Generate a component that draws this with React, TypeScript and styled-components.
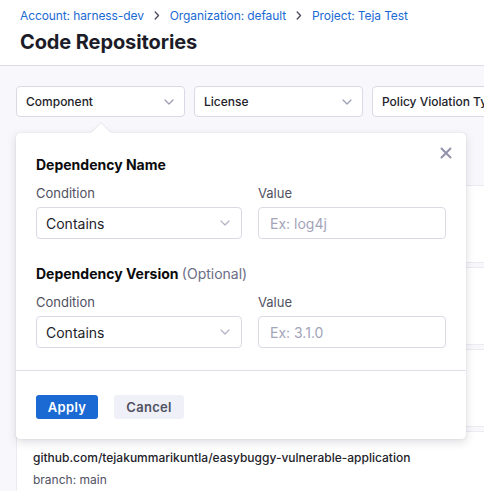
import React from "react";
import styled, { createGlobalStyle } from "styled-components";

const Global = createGlobalStyle`
  html, body { margin: 0; padding: 0; }
  body {
    width: 484px;
    height: 491px;
    overflow: hidden;
    background: #f8f8fc;
    font-family: Inter, "Noto Sans", sans-serif;
    -webkit-font-smoothing: antialiased;
  }
  * { box-sizing: border-box; }
`;

const Page = styled.div`
  position: relative;
  width: 760px;
  height: 491px;
  background: #f8f8fc;
`;

const Header = styled.header`
  height: 66px;
  background: #fff;
  border-bottom: 1px solid #dcdde8;
  padding: 6px 20px 0;
  display: flex;
  flex-direction: column;
`;

const Crumbs = styled.div`
  display: flex;
  align-items: center;
  gap: 10px;
  height: 18px;
  font-size: 12px;
  letter-spacing: -0.1px;
  color: #1b6ad3;
`;

const Sep = styled.span`
  display: flex;
  align-items: center;
`;

const Title = styled.h1`
  margin: 5px 0 0;
  font-size: 20px;
  line-height: 26px;
  font-weight: 700;
  color: #1c1c28;
  letter-spacing: -0.1px;
`;

const Filters = styled.div`
  display: flex;
  gap: 9px;
  padding: 20px 16px 0;
`;

const FilterBox = styled.div`
  width: 169px;
  height: 31px;
  flex: none;
  background: #fff;
  border: 1px solid #d9dae5;
  border-radius: 4px;
  display: flex;
  align-items: center;
  justify-content: space-between;
  padding: 0 10px 0 9px;
  font-size: 12px;
  font-weight: 500;
  color: #22222a;
`;

const List = styled.div`
  display: flex;
  flex-direction: column;
  gap: 4px;
  padding: 68px 0 0 16px;
`;

const Card = styled.div`
  height: 78px;
  background: #fff;
  border: 1px solid #ebebf2;
  border-radius: 4px;
  padding: 16px 16px 0 16px;
`;

const RepoName = styled.div`
  font-size: 12px;
  font-weight: 500;
  color: #22222a;
  line-height: 20px;
`;

const Branch = styled.div`
  margin-top: 2px;
  font-size: 12px;
  color: #4f5162;
  line-height: 20px;
`;

const Popover = styled.div`
  position: absolute;
  left: 16px;
  top: 133px;
  width: 450px;
  height: 306px;
  background: #fff;
  border-radius: 4px;
  box-shadow: 0 0 1px rgba(40, 41, 61, 0.25), 0 3px 10px rgba(96, 97, 112, 0.22);
  display: flex;
  flex-direction: column;

  &::before {
    content: "";
    position: absolute;
    left: 75px;
    top: -10px;
    width: 0;
    height: 0;
    border-left: 10px solid transparent;
    border-right: 10px solid transparent;
    border-bottom: 10px solid #fff;
    filter: drop-shadow(0 -1px 0.5px rgba(40, 41, 61, 0.1));
  }
`;

const Close = styled.button`
  position: absolute;
  right: 14px;
  top: 14px;
  width: 12px;
  height: 12px;
  padding: 0;
  border: none;
  background: none;
  display: flex;
  align-items: center;
  justify-content: center;
`;

const Body = styled.div`
  padding: 22px 20px 0;
  display: flex;
  flex-direction: column;
  height: 238px;
  border-bottom: 1px solid #dcdde8;
`;

const Section = styled.div<{ $gapTop?: number }>`
  display: flex;
  flex-direction: column;
  margin-top: ${(p) => p.$gapTop ?? 0}px;
`;

const Heading = styled.div`
  font-size: 14px;
  line-height: 20px;
  font-weight: 700;
  color: #0b0b0d;
`;

const Optional = styled.span`
  font-weight: 400;
  color: #6b6d85;
`;

const Fields = styled.div`
  margin-top: 9px;
  display: grid;
  grid-template-columns: 206px 188px;
  column-gap: 16px;
`;

const Field = styled.div`
  display: flex;
  flex-direction: column;
  gap: 5px;
`;

const Label = styled.label`
  font-size: 13px;
  line-height: 18px;
  color: #4f5162;
`;

const SelectBox = styled.div`
  height: 32px;
  border: 1px solid #d9dae5;
  border-radius: 4px;
  display: flex;
  align-items: center;
  justify-content: space-between;
  padding: 0 11px 0 9px;
  font-size: 14px;
  color: #22222a;
  background: #fff;
`;

const Input = styled.input`
  height: 32px;
  border: 1px solid #d9dae5;
  border-radius: 4px;
  padding: 0 11px;
  font-family: inherit;
  font-size: 14px;
  color: #22222a;
  outline: none;
  &::placeholder { color: #a3a4b8; }
`;

const Footer = styled.div`
  display: flex;
  gap: 16px;
  padding: 24px 20px 0;
`;

const Button = styled.button<{ $primary?: boolean }>`
  height: 24px;
  border: none;
  border-radius: 3px;
  font-family: inherit;
  font-size: 13px;
  font-weight: 600;
  letter-spacing: 0.3px;
  padding: 0;
  width: ${(p) => (p.$primary ? "62px" : "70px")};
  background: ${(p) => (p.$primary ? "#1b69d3" : "#f0f0f8")};
  color: ${(p) => (p.$primary ? "#fff" : "#4f5162")};
`;

const Chevron = ({ color = "#9b9cb3" }: { color?: string }) => (
  <svg width="10" height="6" viewBox="0 0 10 6" fill="none">
    <path d="M1 1l4 4 4-4" stroke={color} strokeWidth="1.2" strokeLinecap="round" strokeLinejoin="round" />
  </svg>
);

const CrumbChevron = () => (
  <svg width="6" height="9" viewBox="0 0 6 9" fill="none">
    <path d="M1.2 1l3.3 3.5-3.3 3.5" stroke="#4f5162" strokeWidth="1.4" strokeLinecap="round" strokeLinejoin="round" />
  </svg>
);

const Condition = ({ placeholder }: { placeholder: string }) => (
  <Fields>
    <Field>
      <Label>Condition</Label>
      <SelectBox>
        Contains
        <Chevron color="#b2b3c5" />
      </SelectBox>
    </Field>
    <Field>
      <Label>Value</Label>
      <Input placeholder={placeholder} />
    </Field>
  </Fields>
);

export default function App() {
  return (
    <>
      <Global />
      <Page>
        <Header>
          <Crumbs>
            <span>Account: harness-dev</span>
            <Sep><CrumbChevron /></Sep>
            <span>Organization: default</span>
            <Sep><CrumbChevron /></Sep>
            <span>Project: Teja Test</span>
          </Crumbs>
          <Title>Code Repositories</Title>
        </Header>
        <Filters>
          <FilterBox>Component<Chevron /></FilterBox>
          <FilterBox>License<Chevron /></FilterBox>
          <FilterBox>Policy Violation Type<Chevron /></FilterBox>
        </Filters>
        <List>
          <Card />
          <Card />
          <Card />
          <Card>
            <RepoName>github.com/tejakummarikuntla/easybuggy-vulnerable-application</RepoName>
            <Branch>branch: main</Branch>
          </Card>
        </List>
        <Popover>
          <Close aria-label="Close">
            <svg width="12" height="12" viewBox="0 0 12 12">
              <path d="M1.5 1.5l9 9M10.5 1.5l-9 9" stroke="#9293ab" strokeWidth="2" strokeLinecap="round" />
            </svg>
          </Close>
          <Body>
            <Section>
              <Heading>Dependency Name</Heading>
              <Condition placeholder="Ex: log4j" />
            </Section>
            <Section $gapTop={25}>
              <Heading>
                Dependency Version <Optional>(Optional)</Optional>
              </Heading>
              <Condition placeholder="Ex: 3.1.0" />
            </Section>
          </Body>
          <Footer>
            <Button $primary>Apply</Button>
            <Button>Cancel</Button>
          </Footer>
        </Popover>
      </Page>
    </>
  );
}
